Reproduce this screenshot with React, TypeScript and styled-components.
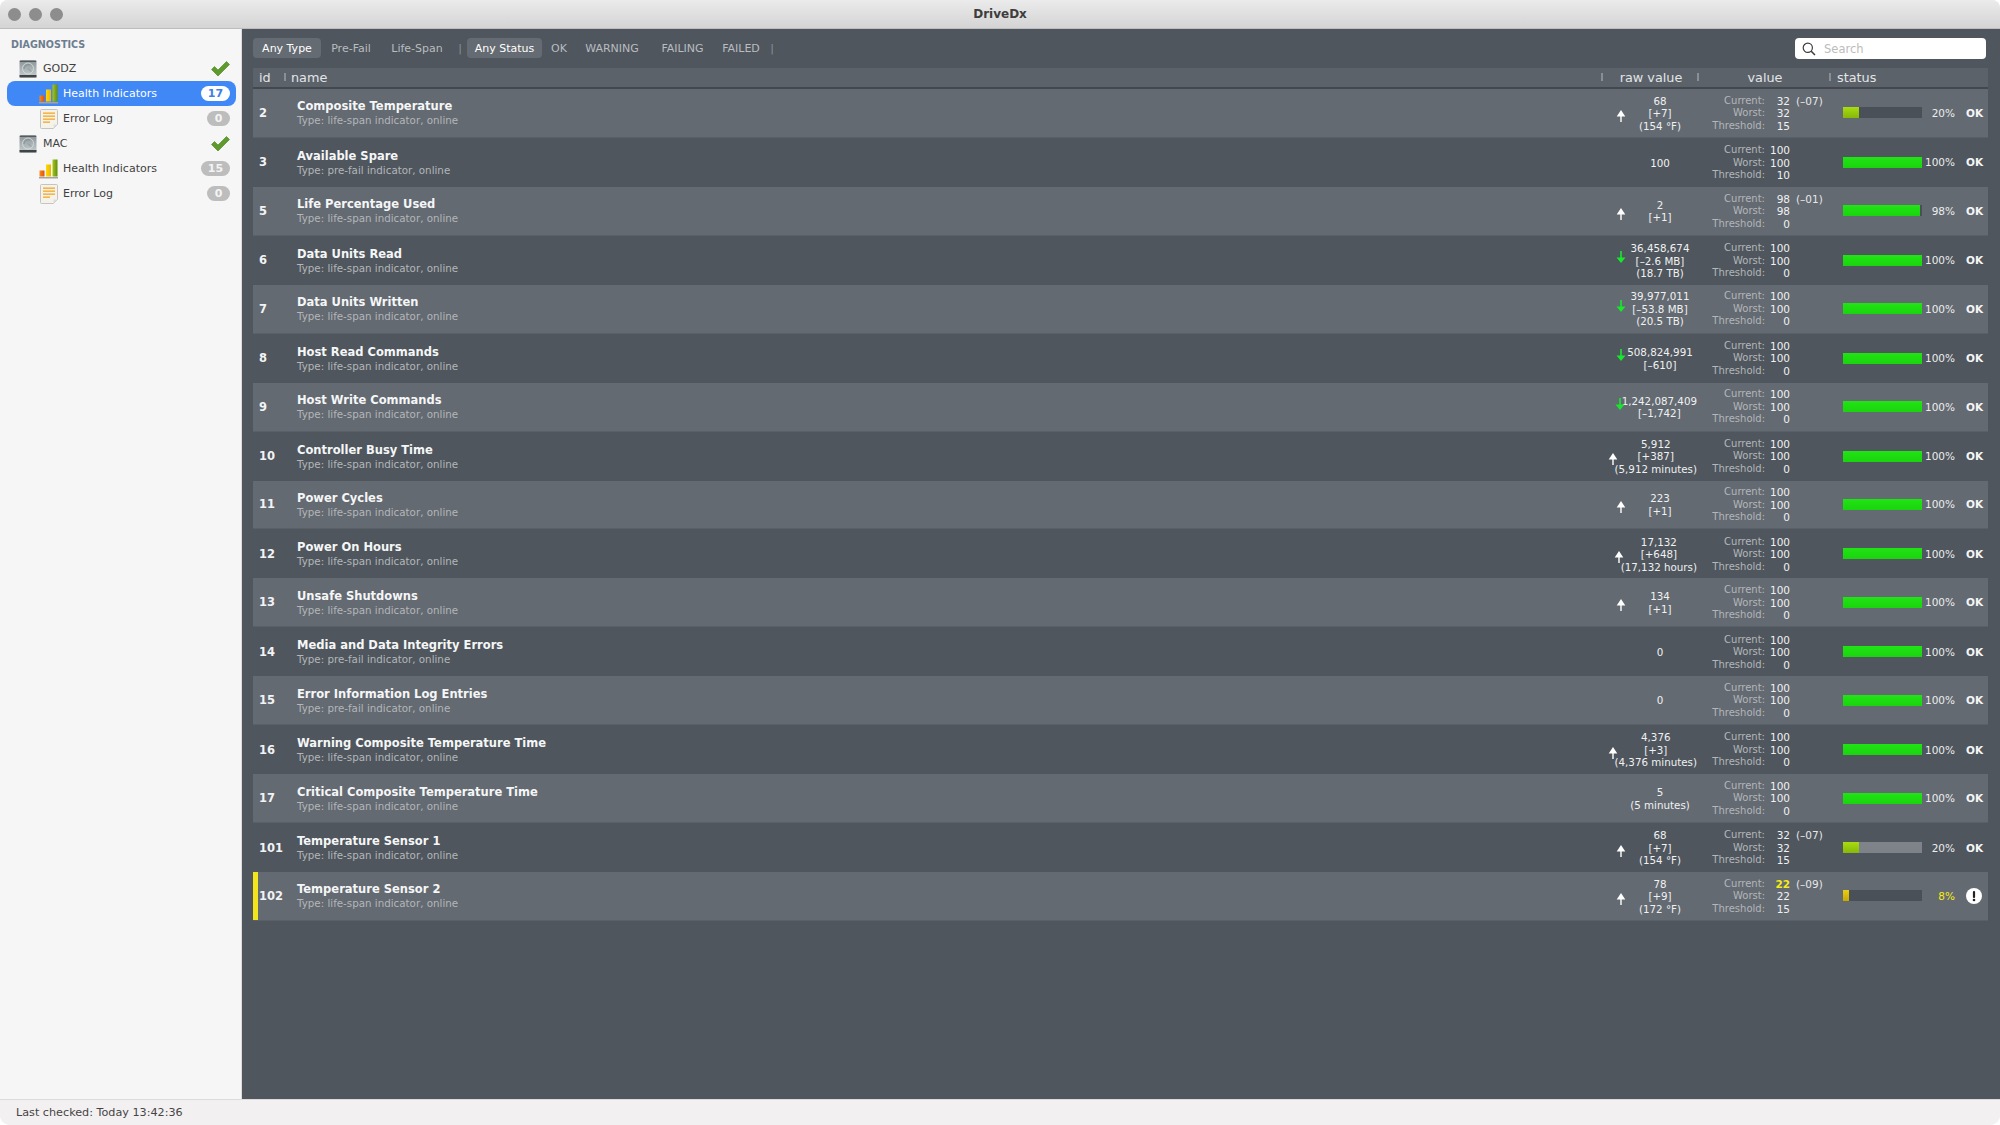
import styled, { createGlobalStyle } from "styled-components";

const GlobalStyle = createGlobalStyle`
  html, body {
    margin: 0;
    padding: 0;
    background: #ffffff;
  }
  body {
    font-family: "DejaVu Sans", "Liberation Sans", sans-serif;
  }
`

const Window = styled.div`
  width: 2000px;
  height: 1125px;
  display: flex;
  flex-direction: column;
  overflow: hidden;
  border-radius: 8px 8px 10px 10px;
  background: #f3f0f1;
`
const TitleBar = styled.header`
  height: 29px;
  flex: none;
  box-sizing: border-box;
  display: flex;
  align-items: center;
  position: relative;
  background: linear-gradient(to bottom, #ebebeb, #d4d4d4);
  border-bottom: 1px solid #bdbdbd;
`
const Lights = styled.div`
  display: flex;
  gap: 8px;
  padding-left: 8px;
`
const Light = styled.span`
  width: 13px;
  height: 13px;
  border-radius: 50%;
  background: #8d8d8d;
`
const Title = styled.h1`
  position: absolute;
  left: 0;
  right: 0;
  margin: 0;
  text-align: center;
  font-size: 12px;
  font-weight: 700;
  color: #3d3d3d;
`
const Body = styled.div`
  flex: 1;
  display: flex;
  min-height: 0;
`
const Sidebar = styled.aside`
  width: 242px;
  flex: none;
  box-sizing: border-box;
  padding: 9px 5px 0 7px;
  background: #f6f6f6;
  border-right: 1px solid #dcdcdc;
`
const SideHeading = styled.div`
  height: 14px;
  line-height: 14px;
  padding-left: 4px;
  margin-bottom: 4px;
  font-size: 9.6px;
  font-weight: 700;
  color: #6d7d90;
`
const SideRow = styled.div<{ $selected?: boolean; $child?: boolean }>`
  height: 25px;
  display: flex;
  align-items: center;
  box-sizing: border-box;
  padding-left: ${p => (p.$child ? "32px" : "12px")};
  padding-right: 6px;
  border-radius: 8px;
  font-size: 11px;
  color: ${p => (p.$selected ? "#ffffff" : "#3f3f3f")};
  background: ${p => (p.$selected ? "#4088f5" : "transparent")};
`
const SideLabel = styled.span<{ $child?: boolean }>`
  margin-left: ${p => (p.$child ? "4px" : "6px")};
  flex: 1;
`
const Badge = styled.span<{ $selected?: boolean; $wide?: boolean }>`
  height: 15px;
  min-width: ${p => (p.$wide ? "29px" : "23px")};
  border-radius: 8px;
  text-align: center;
  line-height: 15px;
  font-size: 11px;
  font-weight: 700;
  color: ${p => (p.$selected ? "#3f7fe8" : "#f4f4f4")};
  background: ${p => (p.$selected ? "#ffffff" : "#bdbdbd")};
`
const Main = styled.main`
  flex: 1;
  min-width: 0;
  display: flex;
  flex-direction: column;
  box-sizing: border-box;
  padding: 9px 12px 0 11px;
  background: #4f565d;
`
const FilterBar = styled.div`
  height: 20px;
  display: flex;
  align-items: center;
  margin-bottom: 10px;
  font-size: 11px;
  color: #b9bcc0;
`
const Filter = styled.span<{ $active?: boolean; $w: number }>`
  width: ${p => p.$w}px;
  height: 20px;
  line-height: 21px;
  flex: none;
  text-align: center;
  border-radius: 4px;
  color: ${p => (p.$active ? "#ffffff" : "#b9bcc0")};
  background: ${p => (p.$active ? "#656b72" : "transparent")};
`
const FilterSep = styled.span<{ $w: number }>`
  width: ${p => p.$w}px;
  flex: none;
  text-align: center;
  color: #8c9096;
`
const SearchBox = styled.div`
  width: 191px;
  height: 21px;
  margin-left: auto;
  margin-right: 2px;
  box-sizing: border-box;
  display: flex;
  align-items: center;
  gap: 8px;
  padding-left: 7px;
  padding-top: 1px;
  border-radius: 4px;
  background: #ffffff;
  font-size: 11.5px;
  color: #bcbcbc;
`
const Columns = styled.div`
  display: grid;
  grid-template-columns: 31px 1fr 96px 132px 159px;
`
const HeaderRow = styled(Columns)`
  height: 21px;
  box-sizing: border-box;
  align-items: center;
  background: #5b6269;
  border-bottom: 2px solid #42484e;
  font-size: 12.8px;
  color: #e4e5e7;
`
const HeaderCell = styled.div<{ $center?: boolean; $pad?: number }>`
  display: flex;
  align-items: center;
  justify-content: ${p => (p.$center ? "center" : "flex-start")};
  padding-left: ${p => p.$pad ?? 0}px;
  position: relative;
`
const Tick = styled.i`
  position: absolute;
  left: 0;
  top: 3px;
  width: 2px;
  height: 8px;
  background: #8a8f95;
`
const TableRow = styled(Columns)<{ $light: boolean }>`
  height: 48.95px;
  box-sizing: border-box;
  align-items: center;
  position: relative;
  background: ${p => (p.$light ? "#646a71" : "transparent")};
  border-bottom: ${p => (p.$light ? "1px solid #5a6067" : "none")};
`
const WarnStripe = styled.i`
  position: absolute;
  left: 0;
  top: 0;
  bottom: 0;
  width: 5px;
  background: #f2e51b;
`
const IdCell = styled.div`
  padding-left: 6px;
  font-size: 11.5px;
  font-weight: 700;
  color: #f2f3f4;
`
const NameCell = styled.div`
  padding-left: 13px;
  padding-top: 1px;
`
const RowName = styled.div`
  height: 15px;
  line-height: 15px;
  font-size: 11.5px;
  font-weight: 700;
  color: #f5f6f7;
`
const RowType = styled.div`
  height: 13px;
  line-height: 13px;
  font-size: 10.3px;
  color: #b3b6ba;
`
const RawCell = styled.div`
  display: flex;
  justify-content: flex-end;
  align-items: center;
`
const RawArrow = styled.svg<{ $down?: boolean }>`
  flex: none;
  margin-right: -3px;
  transform: translateY(${p => (p.$down ? "-3px" : "3px")});
`
const RawText = styled.div`
  min-width: 74px;
  padding-top: 1px;
  text-align: center;
  font-size: 10.3px;
  line-height: 12.5px;
  white-space: nowrap;
  color: #f0f1f2;
`
const ValueCell = styled.div`
  display: grid;
  grid-template-columns: 68px 25px auto;
  grid-auto-rows: 12.5px;
  align-items: center;
  padding-top: 1px;
  line-height: 12.5px;
  font-size: 10.5px;
`
const ValueLabel = styled.span`
  text-align: right;
  font-size: 10px;
  color: #b3b6ba;
`
const ValueNum = styled.span<{ $warn?: boolean }>`
  text-align: right;
  font-weight: ${p => (p.$warn ? 700 : 400)};
  color: ${p => (p.$warn ? "#f5ec17" : "#f0f1f2")};
`
const ValueDelta = styled.span`
  padding-left: 6px;
  color: #e6e7e8;
  white-space: nowrap;
`
const StatusCell = styled.div`
  display: flex;
  align-items: center;
  padding-left: 14px;
`
const BarTrack = styled.div<{ $light: boolean }>`
  width: 79px;
  height: 11px;
  flex: none;
  overflow: hidden;
  background: ${p => (p.$light ? "#495058" : "#7e8389")};
`
const BarFill = styled.div<{ $color: string }>`
  height: 100%;
  background: ${p => p.$color};
`
const Percent = styled.span<{ $warn?: boolean }>`
  width: 33px;
  flex: none;
  text-align: right;
  font-size: 10.5px;
  color: ${p => (p.$warn ? "#f5ec17" : "#eceded")};
`
const StatusText = styled.span`
  flex: 1;
  display: flex;
  justify-content: center;
  padding-left: 6px;
  font-size: 10.5px;
  font-weight: 700;
  color: #f5f6f7;
`
const WarnSvg = styled.svg`
  margin-right: 2px;
`
const StatusBar = styled.footer`
  height: 26px;
  flex: none;
  box-sizing: border-box;
  display: flex;
  align-items: center;
  padding-left: 16px;
  background: #f3f0f1;
  border-top: 1px solid #dcdada;
  font-size: 11.2px;
  color: #454545;
`

function DiskIcon() {
  return (
    <svg width="18" height="18" viewBox="0 0 18 18">
      <defs>
        <linearGradient id="diskFace" x1="0" y1="0" x2="0" y2="1">
          <stop offset="0" stopColor="#8b9598" />
          <stop offset="1" stopColor="#c7ced0" />
        </linearGradient>
      </defs>
      <rect x="0.5" y="0.5" width="17" height="17" rx="2" fill="url(#diskFace)" />
      <rect x="0.5" y="15" width="17" height="2.5" fill="#3f4447" />
      <rect x="0.5" y="0.5" width="17" height="1.5" rx="0.7" fill="#565c5f" />
      <circle cx="9" cy="8.5" r="5.5" fill="none" stroke="#dfe5e6" strokeWidth="0.7" />
      <path d="M5 9c0-3 3-5 6-4M9 8.5l3 3" fill="none" stroke="#7f888b" strokeWidth="0.8" />
    </svg>
  )
}
function ChartIcon() {
  return (
    <svg width="20" height="20" viewBox="0 0 20 20">
      <defs>
        <linearGradient id="barOrange" x1="0" y1="0" x2="1" y2="0">
          <stop offset="0" stopColor="#f58a1f" />
          <stop offset="1" stopColor="#e2500a" />
        </linearGradient>
        <linearGradient id="barYellow" x1="0" y1="0" x2="1" y2="0">
          <stop offset="0" stopColor="#fbd80a" />
          <stop offset="1" stopColor="#eeb400" />
        </linearGradient>
        <linearGradient id="barGreen" x1="0" y1="0" x2="1" y2="0">
          <stop offset="0" stopColor="#a7c41c" />
          <stop offset="1" stopColor="#5f8f06" />
        </linearGradient>
      </defs>
      <rect x="0.5" y="11.5" width="5" height="6" fill="url(#barOrange)" />
      <rect x="7" y="5.5" width="5" height="12" fill="url(#barYellow)" />
      <rect x="13.5" y="0.5" width="5" height="17" fill="url(#barGreen)" />
      <rect x="0" y="18" width="19" height="1.5" fill="#a3a3a3" />
    </svg>
  )
}
function LogIcon() {
  return (
    <svg width="20" height="20" viewBox="0 0 20 20">
      <path d="M1.5 1.5a1 1 0 0 1 1-1h15a1 1 0 0 1 1 1v14l-4 4h-12a1 1 0 0 1-1-1z" fill="#f5f2ea" stroke="#c4c4c4" />
      <path d="M18.5 15.5h-4v4z" fill="#dddddd" />
      <rect x="4" y="3.5" width="12" height="1.3" fill="#f5a623" />
      <rect x="4" y="6.5" width="12" height="1.3" fill="#f5a623" />
      <rect x="4" y="9.5" width="12" height="1.3" fill="#f5a623" />
      <rect x="4" y="12.5" width="7" height="1.3" fill="#f5a623" />
    </svg>
  )
}
function CheckIcon() {
  return (
    <svg width="19" height="16" viewBox="0 0 19 16">
      <path d="M0.5 8.5l3-3 3.5 3.5L15.5 0.5l3 3L7 15z" fill="#5e9a2c" stroke="#4b7f22" strokeWidth="0.6" />
    </svg>
  )
}
function SearchIcon() {
  return (
    <svg width="14" height="14" viewBox="0 0 14 14">
      <circle cx="5.8" cy="5.8" r="4.6" fill="none" stroke="#3c3c3c" strokeWidth="1.2" />
      <path d="M9.2 9.2L13 13" stroke="#3c3c3c" strokeWidth="1.5" />
    </svg>
  )
}
function Arrow({ down }: { down?: boolean }) {
  return (
    <RawArrow $down={down} width="10" height="12" viewBox="0 0 10 12">
      {down ? (
        <path d="M4.2 0h1.6v6.5H9.5L5 12 0.5 6.5h3.7z" fill="#16e82c" />
      ) : (
        <path d="M5 0l4.3 6.5H5.7V12H4.3V6.5H0.7z" fill="#ffffff" />
      )}
    </RawArrow>
  )
}
function WarnIcon() {
  return (
    <WarnSvg width="16" height="16" viewBox="0 0 16 16">
      <circle cx="8" cy="8" r="8" fill="#ffffff" />
      <rect x="6.9" y="3" width="2.2" height="7" rx="1" fill="#222222" />
      <circle cx="8" cy="12" r="1.3" fill="#222222" />
    </WarnSvg>
  )
}

type Indicator = {
  id: number
  name: string
  kind: "life-span" | "pre-fail"
  arrow?: "up" | "down"
  raw: string[]
  current: number
  delta?: string
  worst: number
  threshold: number
  percent: number
}

const indicators: Indicator[] = [
  { id: 2, name: "Composite Temperature", kind: "life-span", arrow: "up", raw: ["68", "[+7]", "(154 °F)"], current: 32, delta: "(–07)", worst: 32, threshold: 15, percent: 20 },
  { id: 3, name: "Available Spare", kind: "pre-fail", raw: ["100"], current: 100, worst: 100, threshold: 10, percent: 100 },
  { id: 5, name: "Life Percentage Used", kind: "life-span", arrow: "up", raw: ["2", "[+1]"], current: 98, delta: "(–01)", worst: 98, threshold: 0, percent: 98 },
  { id: 6, name: "Data Units Read", kind: "life-span", arrow: "down", raw: ["36,458,674", "[–2.6 MB]", "(18.7 TB)"], current: 100, worst: 100, threshold: 0, percent: 100 },
  { id: 7, name: "Data Units Written", kind: "life-span", arrow: "down", raw: ["39,977,011", "[–53.8 MB]", "(20.5 TB)"], current: 100, worst: 100, threshold: 0, percent: 100 },
  { id: 8, name: "Host Read Commands", kind: "life-span", arrow: "down", raw: ["508,824,991", "[–610]"], current: 100, worst: 100, threshold: 0, percent: 100 },
  { id: 9, name: "Host Write Commands", kind: "life-span", arrow: "down", raw: ["1,242,087,409", "[–1,742]"], current: 100, worst: 100, threshold: 0, percent: 100 },
  { id: 10, name: "Controller Busy Time", kind: "life-span", arrow: "up", raw: ["5,912", "[+387]", "(5,912 minutes)"], current: 100, worst: 100, threshold: 0, percent: 100 },
  { id: 11, name: "Power Cycles", kind: "life-span", arrow: "up", raw: ["223", "[+1]"], current: 100, worst: 100, threshold: 0, percent: 100 },
  { id: 12, name: "Power On Hours", kind: "life-span", arrow: "up", raw: ["17,132", "[+648]", "(17,132 hours)"], current: 100, worst: 100, threshold: 0, percent: 100 },
  { id: 13, name: "Unsafe Shutdowns", kind: "life-span", arrow: "up", raw: ["134", "[+1]"], current: 100, worst: 100, threshold: 0, percent: 100 },
  { id: 14, name: "Media and Data Integrity Errors", kind: "pre-fail", raw: ["0"], current: 100, worst: 100, threshold: 0, percent: 100 },
  { id: 15, name: "Error Information Log Entries", kind: "pre-fail", raw: ["0"], current: 100, worst: 100, threshold: 0, percent: 100 },
  { id: 16, name: "Warning Composite Temperature Time", kind: "life-span", arrow: "up", raw: ["4,376", "[+3]", "(4,376 minutes)"], current: 100, worst: 100, threshold: 0, percent: 100 },
  { id: 17, name: "Critical Composite Temperature Time", kind: "life-span", raw: ["5", "(5 minutes)"], current: 100, worst: 100, threshold: 0, percent: 100 },
  { id: 101, name: "Temperature Sensor 1", kind: "life-span", arrow: "up", raw: ["68", "[+7]", "(154 °F)"], current: 32, delta: "(–07)", worst: 32, threshold: 15, percent: 20 },
  { id: 102, name: "Temperature Sensor 2", kind: "life-span", arrow: "up", raw: ["78", "[+9]", "(172 °F)"], current: 22, delta: "(–09)", worst: 22, threshold: 15, percent: 8 },
]

function barColor(percent: number) {
  if (percent < 10) return "linear-gradient(to bottom, #e8cf12, #c9a800)"
  if (percent < 50) return "linear-gradient(to bottom, #a8dc10, #86b808)"
  return "linear-gradient(to bottom, #20e414, #1ad40e)"
}

function IndicatorRow({ item, light }: { item: Indicator; light: boolean }) {
  const warn = item.percent < 10
  return (
    <TableRow $light={light}>
      {warn && <WarnStripe />}
      <IdCell>{item.id}</IdCell>
      <NameCell>
        <RowName>{item.name}</RowName>
        <RowType>Type: {item.kind} indicator, online</RowType>
      </NameCell>
      <RawCell>
        {item.arrow && <Arrow down={item.arrow === "down"} />}
        <RawText>
          {item.raw.map(line => <div key={line}>{line}</div>)}
        </RawText>
      </RawCell>
      <ValueCell>
        <ValueLabel>Current:</ValueLabel>
        <ValueNum $warn={warn}>{item.current}</ValueNum>
        <ValueDelta>{item.delta}</ValueDelta>
        <ValueLabel>Worst:</ValueLabel>
        <ValueNum>{item.worst}</ValueNum>
        <span />
        <ValueLabel>Threshold:</ValueLabel>
        <ValueNum>{item.threshold}</ValueNum>
        <span />
      </ValueCell>
      <StatusCell>
        <BarTrack $light={light}>
          <BarFill $color={barColor(item.percent)} style={{ width: `${item.percent}%` }} />
        </BarTrack>
        <Percent $warn={warn}>{item.percent}%</Percent>
        <StatusText>{warn ? <WarnIcon /> : "OK"}</StatusText>
      </StatusCell>
    </TableRow>
  )
}

function DriveGroup({ name, count, selected }: { name: string; count: number; selected?: boolean }) {
  return (
    <>
      <SideRow>
        <DiskIcon />
        <SideLabel>{name}</SideLabel>
        <CheckIcon />
      </SideRow>
      <SideRow $child $selected={selected}>
        <ChartIcon />
        <SideLabel $child>Health Indicators</SideLabel>
        <Badge $wide $selected={selected}>{count}</Badge>
      </SideRow>
      <SideRow $child>
        <LogIcon />
        <SideLabel $child>Error Log</SideLabel>
        <Badge>0</Badge>
      </SideRow>
    </>
  )
}

export default function App() {
  return (
    <Window>
      <GlobalStyle />
      <TitleBar>
        <Lights>
          <Light />
          <Light />
          <Light />
        </Lights>
        <Title>DriveDx</Title>
      </TitleBar>
      <Body>
        <Sidebar>
          <SideHeading>DIAGNOSTICS</SideHeading>
          <DriveGroup name="GODZ" count={17} selected />
          <DriveGroup name="MAC" count={15} />
        </Sidebar>
        <Main>
          <FilterBar>
            <Filter $active $w={68}>Any Type</Filter>
            <Filter $w={60}>Pre-Fail</Filter>
            <Filter $w={72}>Life-Span</Filter>
            <FilterSep $w={14}>|</FilterSep>
            <Filter $active $w={75}>Any Status</Filter>
            <Filter $w={34}>OK</Filter>
            <Filter $w={72}>WARNING</Filter>
            <Filter $w={69}>FAILING</Filter>
            <Filter $w={48}>FAILED</Filter>
            <FilterSep $w={14}>|</FilterSep>
            <SearchBox>
              <SearchIcon />
              Search
            </SearchBox>
          </FilterBar>
          <HeaderRow>
            <HeaderCell $pad={6}>id</HeaderCell>
            <HeaderCell $pad={7}><Tick />name</HeaderCell>
            <HeaderCell $center $pad={4}><Tick />raw value</HeaderCell>
            <HeaderCell $center $pad={4}><Tick />value</HeaderCell>
            <HeaderCell $pad={8}><Tick />status</HeaderCell>
          </HeaderRow>
          {indicators.map((item, i) => (
            <IndicatorRow key={item.id} item={item} light={i % 2 === 0} />
          ))}
        </Main>
      </Body>
      <StatusBar>Last checked: Today 13:42:36</StatusBar>
    </Window>
  )
}
